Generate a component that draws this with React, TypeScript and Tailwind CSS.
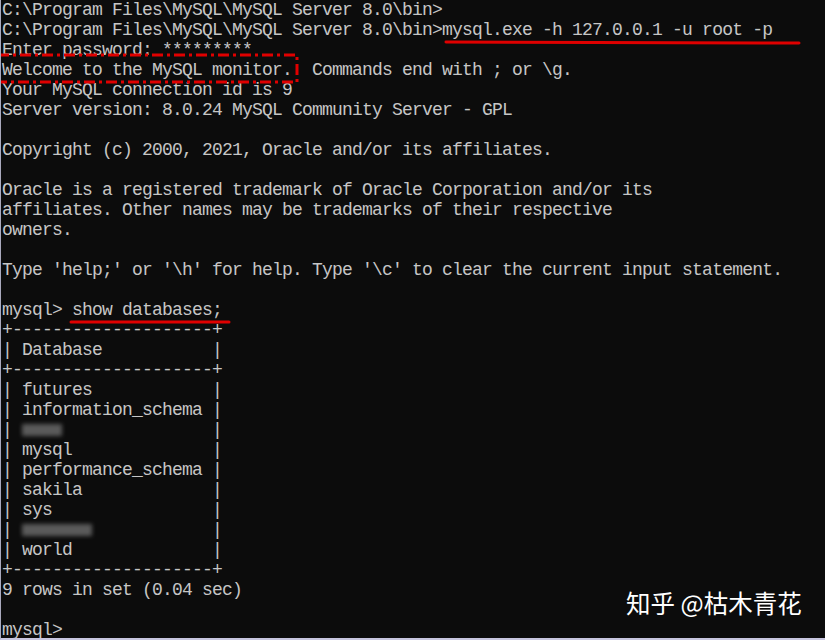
const LINES: string[] = [
  "C:\\Program Files\\MySQL\\MySQL Server 8.0\\bin>",
  "C:\\Program Files\\MySQL\\MySQL Server 8.0\\bin>mysql.exe -h 127.0.0.1 -u root -p",
  "Enter password: *********",
  "Welcome to the MySQL monitor.  Commands end with ; or \\g.",
  "Your MySQL connection id is 9",
  "Server version: 8.0.24 MySQL Community Server - GPL",
  "",
  "Copyright (c) 2000, 2021, Oracle and/or its affiliates.",
  "",
  "Oracle is a registered trademark of Oracle Corporation and/or its",
  "affiliates. Other names may be trademarks of their respective",
  "owners.",
  "",
  "Type 'help;' or '\\h' for help. Type '\\c' to clear the current input statement.",
  "",
  "mysql> show databases;",
  "+--------------------+",
  "| Database           |",
  "+--------------------+",
  "| futures            |",
  "| information_schema |",
  "#BLUR4",
  "| mysql              |",
  "| performance_schema |",
  "| sakila             |",
  "| sys                |",
  "#BLUR7",
  "| world              |",
  "+--------------------+",
  "9 rows in set (0.04 sec)",
  "",
  "mysql>",
];

const Blurred = ({ chars }: { chars: number }) => (
  <span className="whitespace-pre">
    {"| "}
    <span
      className="inline-block align-middle h-[12px] bg-[#6e6e6e] blur-[2px] opacity-80"
      style={{ width: chars * 10 }}
    />
    {" ".repeat(19 - chars)}
    {"|"}
  </span>
);

const App = () => {
  return (
    <div className="relative w-[825px] h-[640px] overflow-hidden bg-[#0c0c0c] border-l border-b-[2px] border-l-[#a9a9bd] border-b-[#c8c6e0]">
      <div className="pl-[1px] font-['Liberation_Mono',monospace] text-[18px] tracking-[-0.8px] leading-[20px] text-[#c6c6c6]">
        {LINES.map((line, i) => (
          <div key={i} className="h-5 whitespace-pre">
            {line === "#BLUR4" ? <Blurred chars={4} /> : line === "#BLUR7" ? <Blurred chars={7} /> : line}
          </div>
        ))}
      </div>

      {/* red annotations */}
      <svg className="absolute left-0 top-0" width="825" height="640">
        <line x1="445" y1="42" x2="798" y2="43" stroke="#e00000" strokeWidth="3" strokeLinecap="round" />
        <rect
          x="-3"
          y="55"
          width="299"
          height="27"
          fill="none"
          stroke="#e00000"
          strokeWidth="3"
          strokeDasharray="11 4 3 4"
        />
        <line x1="70" y1="322" x2="228" y2="322" stroke="#e00000" strokeWidth="3" strokeLinecap="round" />
      </svg>

      {/* watermark */}
      <div className="absolute left-[625px] top-[591px] font-['Noto_Sans_CJK_SC',sans-serif] text-[24.5px] leading-none text-white">
        知乎 @枯木青花
      </div>
    </div>
  );
};

export default App;
